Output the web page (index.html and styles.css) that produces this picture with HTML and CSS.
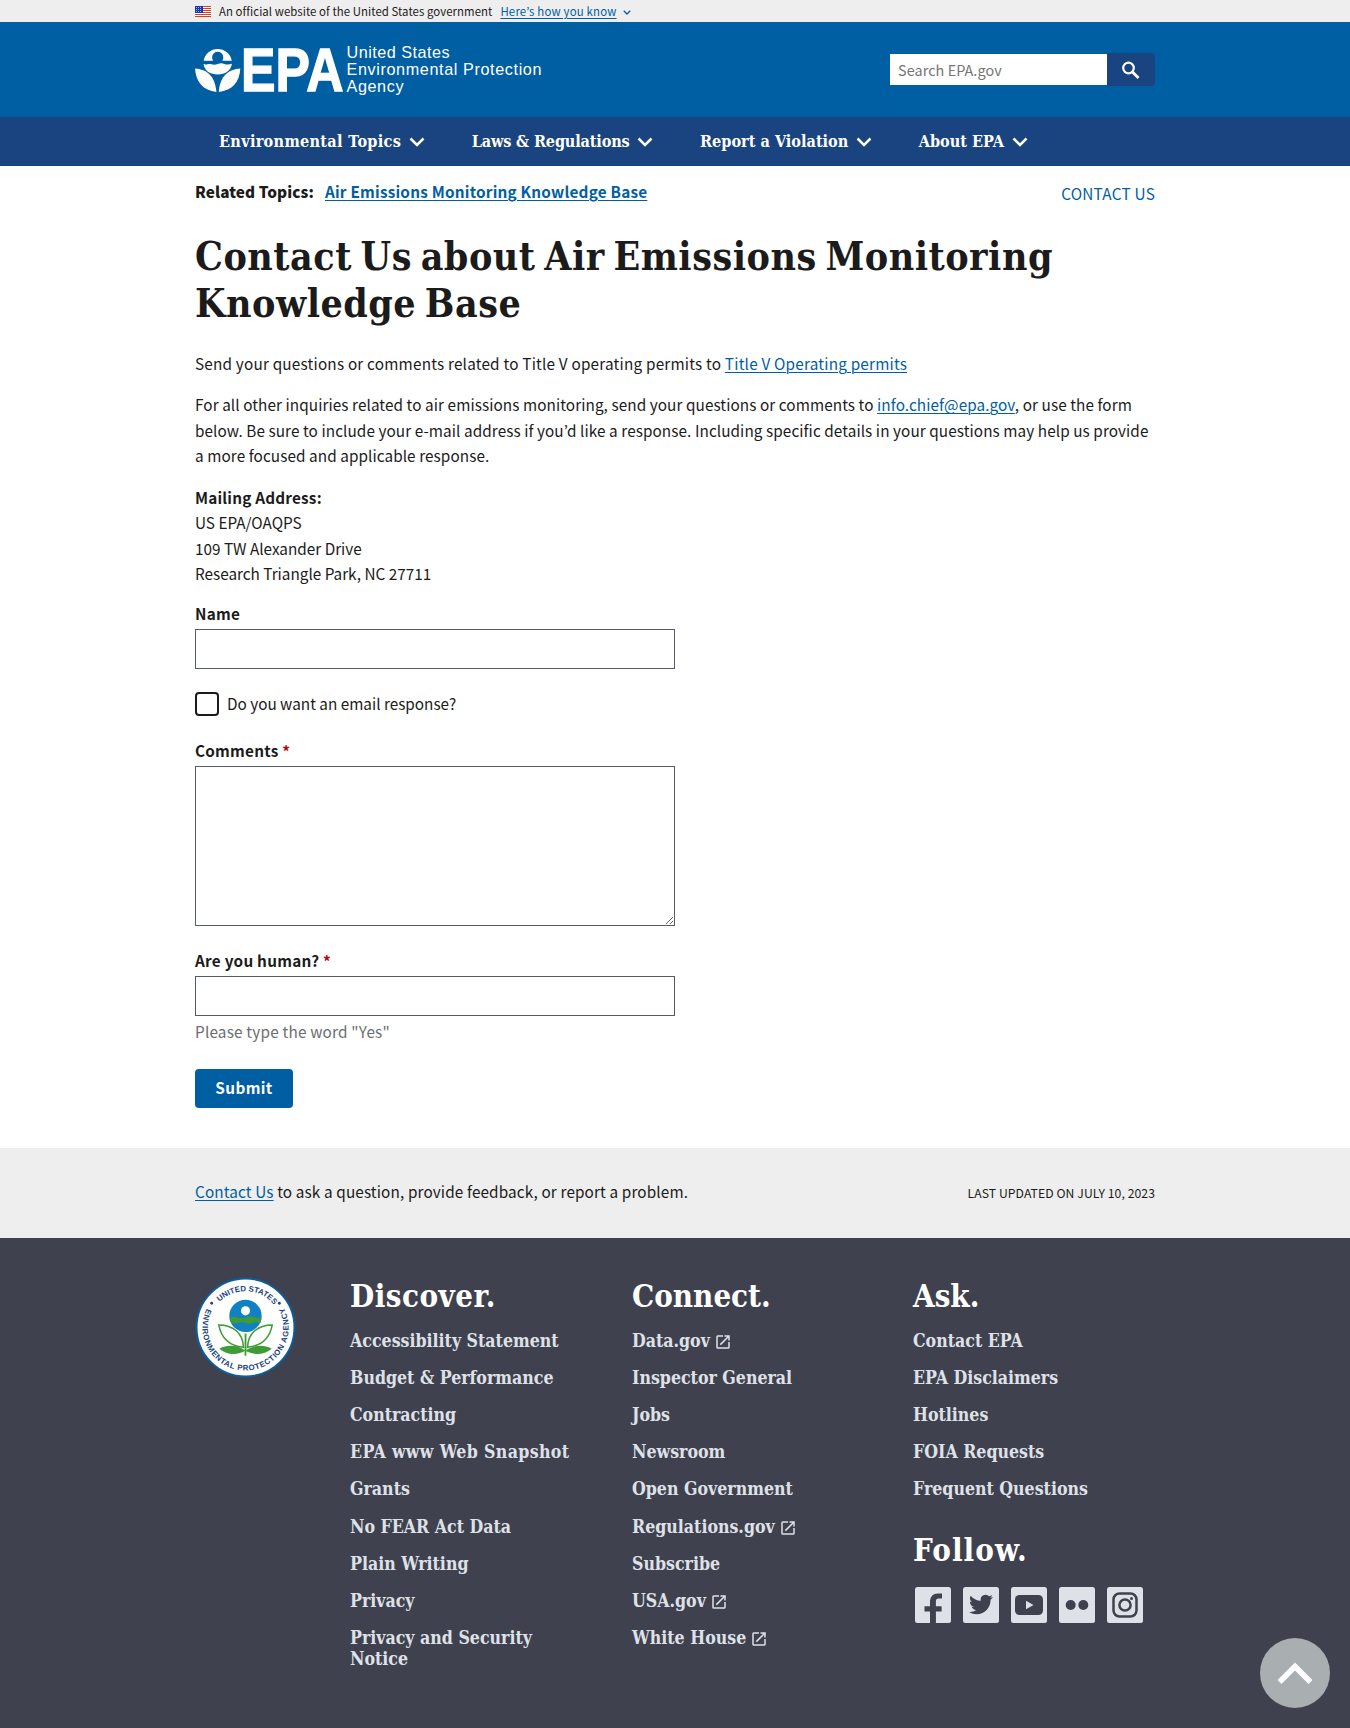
FILE: index.html
```html
<!DOCTYPE html>
<html lang="en">
<head>
<meta charset="utf-8">
<title>Contact Us about Air Emissions Monitoring Knowledge Base | US EPA</title>
<link rel="stylesheet" href="styles.css">
</head>
<body>
<svg class="defs" width="0" height="0">
  <symbol id="chevron" viewBox="0 0 16 10"><path d="M1.5 1.5 8 8l6.500-6.500" fill="none" stroke="currentColor" stroke-width="2.500"/></symbol>
  <symbol id="external" viewBox="0 0 24 24"><path fill="currentColor" d="M19 19H5V5h7V3H5a2 2 0 0 0-2 2v14a2 2 0 0 0 2 2h14c1.100 0 2-.9 2-2v-7h-2v7zM14 3v2h3.590l-9.830 9.830 1.410 1.410L19 6.410V10h2V3h-7z"/></symbol>
</svg>

<div class="banner">
  <div class="wrap banner-row">
    <svg class="flag" viewBox="0 0 16 11"><path fill="#fff" d="M0 0h16v11H0z"/><path stroke="#db3e1f" stroke-width="1" d="M0 .5h16M0 2.500h16M0 4.500h16M0 6.500h16M0 8.500h16M0 10.500h16"/><path fill="#1e33b1" d="M0 0h8v7H0z"/><path stroke="#aab4ee" stroke-width="1" stroke-dasharray="1 1" d="M1 1.500h6M1 3.500h6M1 5.500h6"/></svg>
    <span class="banner-text">An official website of the United States government</span>
    <a class="banner-link" href="#">Here’s how you know</a>
    <svg class="banner-chevron"><use href="#chevron"/></svg>
  </div>
</div>

<header class="header">
  <div class="wrap header-row">
    <svg class="logo" viewBox="0 0 350 52" role="img">
      <g fill="#fff">
        <path d="M8.600 14.800a14.300 14.300 0 0 1 28.200 0h-9.600a5.600 5.600 0 1 0-9 0z"/>
        <path d="M8.500 18c3 1.300 4.500-.6 7 0s4.200 1.200 7.200.1 4.300-.9 6.700-.1 4.500.9 7.500-.2C36 25 30 28.500 22.700 28.500S9.500 25 8.500 18z"/>
        <path d="M0 22.500c12 1 20 7 21.500 23.500C8 44.500 1 36 0 22.500zM45.300 22.500c-12 1-20 7-21.500 23.500C37.500 44.500 44.500 36 45.300 22.500z"/>
      </g>
      <g class="logo-epa"><text x="46" y="44.500" textLength="102.500" lengthAdjust="spacingAndGlyphs">EPA</text></g>
      <g class="logo-name">
        <text x="151.500" y="12.300" textLength="103">United States</text>
        <text x="151.500" y="28.900" textLength="195">Environmental Protection</text>
        <text x="151.500" y="45.800" textLength="57">Agency</text>
      </g>
    </svg>
    <form class="search">
      <input class="search-input" type="text" placeholder="Search EPA.gov">
      <button class="search-button" type="button"><svg viewBox="0 0 24 24" fill="none" stroke="#fff"><circle cx="9.500" cy="9" r="5.300" stroke-width="2.200"/><path d="m13.500 13 6 6" stroke-width="2.800"/></svg></button>
    </form>
  </div>
</header>

<nav class="nav">
  <div class="wrap nav-row">
    <a href="#" class="nav-item nav-item--wide">Environmental Topics<svg><use href="#chevron"/></svg></a>
    <a href="#" class="nav-item nav-item--tight">Laws &amp; Regulations<svg><use href="#chevron"/></svg></a>
    <a href="#" class="nav-item">Report a Violation<svg><use href="#chevron"/></svg></a>
    <a href="#" class="nav-item">About EPA<svg><use href="#chevron"/></svg></a>
  </div>
</nav>

<main class="wrap main">
  <div class="topics">
    <div class="topics-list"><b>Related Topics:</b><a href="#">Air Emissions Monitoring Knowledge Base</a></div>
    <a class="topics-contact" href="#">CONTACT US</a>
  </div>
  <h1>Contact Us about Air Emissions Monitoring Knowledge Base</h1>
  <p class="lead">Send your questions or comments related to Title V operating permits to <a href="#">Title V Operating permits</a></p>
  <p class="body">For all other inquiries related to air emissions monitoring, send your questions or comments to <a href="#">info.chief@epa.gov</a>, or use the form<br>below. Be sure to include your e-mail address if you’d like a response. Including specific details in your questions may help us provide<br>a more focused and applicable response.</p>
  <p><b>Mailing Address:</b><br>US EPA/OAQPS<br>109 TW Alexander Drive<br>Research Triangle Park, NC 27711</p>
  <form class="form">
    <label class="label" for="name">Name</label>
    <input class="field" id="name" type="text">
    <label class="check"><span class="check-box"></span>Do you want an email response?</label>
    <label class="label" for="comments">Comments <span class="req">*</span></label>
    <textarea class="field area" id="comments"></textarea>
    <label class="label" for="human">Are you human? <span class="req">*</span></label>
    <input class="field" id="human" type="text">
    <div class="hint">Please type the word "Yes"</div>
    <button class="submit" type="button">Submit</button>
  </form>
</main>

<div class="feedback">
  <div class="wrap feedback-row">
    <div class="feedback-text"><a href="#">Contact Us</a> to ask a question, provide feedback, or report a problem.</div>
    <div class="updated">LAST UPDATED ON JULY 10, 2023</div>
  </div>
</div>

<footer class="footer">
  <div class="wrap footer-grid">
    <svg class="seal" viewBox="0 0 100 100" role="img">
      <circle cx="50" cy="50" r="48.500" fill="#fff" stroke="#0d5c9c" stroke-width="2"/>
      <defs>
        <path id="arc-top" d="M14 50a36 36 0 0 1 72 0"/>
        <path id="arc-bottom" d="M23.500 16.500a42.700 42.700 0 1 0 53 0"/>
      </defs>
      <g class="seal-text">
        <text><textPath href="#arc-top" startOffset="28">UNITED STATES</textPath></text>
        <text class="seal-lower"><textPath href="#arc-bottom" startOffset="19">ENVIRONMENTAL PROTECTION AGENCY</textPath></text>
      </g>
      <circle cx="16.500" cy="26" r="1.400" fill="#1a4480"/><circle cx="83.500" cy="26" r="1.400" fill="#1a4480"/>
      <circle cx="50" cy="38.500" r="16" fill="#1281c4"/>
      <path fill="#3f9c35" d="M34.200 40.500q4-2 8-.5t8 0 8-.5 7.700 1q-.3 3-1.500 5-4-1.500-7 0t-7 0-7 0-7.700-.5q-1.200-2-1.500-4.500z"/>
      <circle cx="50" cy="33.500" r="4.500" fill="#fff"/>
      <g fill="#fff" stroke="#3f9c35" stroke-width="1.500"><path d="M23.500 47.500c14 0 24 8 24.500 22-14-1-22-9-24.500-22zM76.500 47.500c-14 0-24 8-24.500 22 14-1 22-9 24.500-22z"/></g>
      <path fill="#3f9c35" d="M24 71c9-5 20-3 26 2 6-5 17-7 26-2-8 7-19 6-26 2-7 4-18 5-26-2z"/>
      <path stroke="#3f9c35" stroke-width="1.800" d="M50 56v22"/>
    </svg>
    <div class="footer-col">
      <h2 class="discover">Discover.</h2>
      <ul>
        <li>Accessibility Statement</li><li>Budget &amp; Performance</li><li>Contracting</li><li class="snapshot">EPA www Web Snapshot</li><li>Grants</li><li>No FEAR Act Data</li><li>Plain Writing</li><li>Privacy</li><li>Privacy and Security<br>Notice</li>
      </ul>
    </div>
    <div class="footer-col">
      <h2>Connect.</h2>
      <ul>
        <li>Data.gov<svg><use href="#external"/></svg></li><li>Inspector General</li><li>Jobs</li><li>Newsroom</li><li>Open Government</li><li>Regulations.gov<svg><use href="#external"/></svg></li><li>Subscribe</li><li>USA.gov<svg><use href="#external"/></svg></li><li>White House<svg><use href="#external"/></svg></li>
      </ul>
    </div>
    <div class="footer-col">
      <h2>Ask.</h2>
      <ul>
        <li>Contact EPA</li><li>EPA Disclaimers</li><li>Hotlines</li><li>FOIA Requests</li><li>Frequent Questions</li>
      </ul>
      <h2 class="follow">Follow.</h2>
      <div class="social">
        <svg viewBox="0 0 36 36"><rect width="36" height="36" rx="2.500"/><path class="ink" d="M15 36V24.500H9.500v-5.200H15v-4.100c0-5.500 3-8.600 8-8.600h4v5h-3.100c-2.300 0-3 1-3 3v4.700h5.700v5.200h-5.700V36z"/></svg>
        <svg viewBox="0 0 36 36"><rect width="36" height="36" rx="2.500"/><path class="ink" transform="translate(6 5.500)" d="M23.950 4.570a10 10 0 0 1-2.820.77 4.960 4.960 0 0 0 2.160-2.720c-.95.550-2 .96-3.130 1.180a4.920 4.920 0 0 0-8.380 4.480C7.690 8.100 4.070 6.130 1.640 3.160a4.820 4.820 0 0 0-.67 2.480c0 1.710.87 3.210 2.190 4.100a4.900 4.900 0 0 1-2.230-.62v.06a4.920 4.920 0 0 0 3.950 4.830 5 5 0 0 1-2.210.08 4.940 4.940 0 0 0 4.600 3.420A9.870 9.870 0 0 1 0 19.540a13.990 13.990 0 0 0 7.550 2.210c9.050 0 13.990-7.500 13.990-13.980 0-.21 0-.42-.01-.63.960-.69 1.800-1.560 2.460-2.550z"/></svg>
        <svg viewBox="0 0 36 36"><rect width="36" height="36" rx="2.500"/><rect class="ink" x="4" y="8" width="28" height="20" rx="4.500"/><path d="M15 13.700v8.600l7.500-4.300z"/></svg>
        <svg viewBox="0 0 36 36"><rect width="36" height="36" rx="2.500"/><circle class="ink" cx="11.700" cy="18" r="5"/><circle class="ink" cx="24.300" cy="18" r="5"/></svg>
        <svg viewBox="0 0 36 36"><rect width="36" height="36" rx="2.500"/><g class="line"><rect x="6.500" y="6.500" width="23" height="23" rx="6"/><circle cx="18" cy="18" r="5.600"/></g><circle class="ink" cx="24.500" cy="11.500" r="1.500"/></svg>
      </div>
    </div>
  </div>
</footer>
<a class="to-top" href="#"><svg viewBox="0 0 36 24"><path d="M2.500 21 18 5.500 33.500 21" fill="none" stroke="#fff" stroke-width="5.500"/></svg></a>
</body>
</html>
```
FILE: styles.css
```css
* { box-sizing: border-box; }
body {
  margin: 0;
  background: #fff;
  color: #1b1b1b;
  font-family: "Noto Sans CJK KR", "Noto Sans", sans-serif;
  font-size: 15.3px;
  line-height: 25.4px;
}
a { color: #005ea2; text-decoration-thickness: 1px; text-underline-offset: 2px; }
b { letter-spacing: .2px; }
.defs { position: absolute; }
.wrap { width: 960px; margin: 0 auto; }

.banner { height: 22px; background: #eee; }
.banner-row { display: flex; align-items: center; height: 22px; font-size: 11.400px; line-height: 22px; letter-spacing: .06px; }
.flag { width: 16px; height: 11px; margin-right: 8px; }
.banner-link { margin-left: 8px; letter-spacing: .2px; }
.banner-chevron { width: 8px; height: 5px; margin: 2px 0 0 6px; color: #005ea2; }

.header { height: 95px; background: #005ea2; }
.header-row { display: flex; justify-content: space-between; align-items: flex-start; }
.logo { width: 350px; height: 52px; margin-top: 24px; overflow: visible; }
.logo-epa { fill: #fff; stroke: #fff; stroke-width: 1.400px; font: bold 62px "Liberation Sans", sans-serif; }
.logo-name { fill: #fff; font: 16.200px "Liberation Sans", sans-serif; }
.search { display: flex; align-items: center; margin-top: 31px; height: 33px; }
.search-input { width: 217px; height: 31px; border: 0; padding: 0 8px; font: 14.400px "Noto Sans CJK KR", sans-serif; letter-spacing: .07px; }
.search-input::placeholder { color: #757575; }
.search-button { width: 48px; height: 33px; border: 0; padding: 5px 12px 3px; background: #1a4480; border-radius: 0 4px 4px 0; }
.search-button svg { display: block; width: 24px; height: 24px; }

.nav { height: 49px; background: #1a4480; }
.nav-row { display: flex; gap: 47px; padding-left: 24px; }
.nav-item {
  display: flex; align-items: center; height: 49px;
  color: #fff; text-decoration: none; white-space: nowrap;
  font: bold 16.100px/49px "DejaVu Serif Condensed", "DejaVu Serif", serif;
}
.nav-item--wide { letter-spacing: .3px; }
.nav-item--tight { letter-spacing: -.15px; }
.nav-item svg { width: 16px; height: 10px; margin: 0 0 0 7.500px; }

.topics { display: flex; justify-content: space-between; padding-top: 13px; }
.topics-list { display: flex; gap: 11px; font-weight: bold; letter-spacing: .22px; }
.topics-list b { letter-spacing: .1px; }
.topics-contact { margin-top: 2px; text-decoration: none; letter-spacing: .25px; }
h1, h2 { font-family: "DejaVu Serif Condensed", "DejaVu Serif", serif; font-weight: bold; }
h1 { margin: 27px 0 24px; font-size: 39px; line-height: 47px; letter-spacing: .5px; word-spacing: -4px; }
p { margin: 0 0 16px; white-space: nowrap; }
.lead { margin-bottom: 15.500px; letter-spacing: .2px; }
.body { margin-bottom: 16.500px; letter-spacing: .08px; }

.form { display: flex; flex-direction: column; align-items: flex-start; }
.label { font-weight: bold; line-height: 20px; letter-spacing: .25px; }
.req { color: #b50909; }
.field { width: 480px; height: 40px; margin: 6px 0 0; border: 1px solid #565c65; background: #fff; }
.area { height: 160px; margin-bottom: 24px; }
.check { display: flex; align-items: center; gap: 8px; margin: 23px 0 24px; height: 24px; }
.check-box { width: 24px; height: 24px; border: 2px solid #1b1b1b; border-radius: 4px; }
.hint { margin-top: 3px; color: #6b6e72; letter-spacing: .2px; }
.submit { width: 98px; height: 39px; margin-top: 25px; padding: 0 0 3px; border: 0; border-radius: 4px; background: #005ea2; color: #fff; font: bold 15.300px/16px "Noto Sans CJK KR", sans-serif; letter-spacing: .4px; }

.feedback { margin-top: 40px; height: 90px; background: #eee; }
.feedback-row { display: flex; justify-content: space-between; align-items: center; height: 88px; }
.feedback-text { letter-spacing: .13px; }
.updated { padding-top: 4px; font-size: 12.200px; letter-spacing: .07px; }

.footer { height: 490px; background: #3f424e; }
.footer-grid { display: grid; grid-template-columns: 155px 282px 281px 1fr; padding-top: 39px; }
.seal { width: 101px; height: 101px; }
.seal-text { fill: #1a4480; font: bold 7.800px "Liberation Sans", sans-serif; }
.seal-lower { letter-spacing: .6px; }
.footer h2 { margin: 0 0 14.500px; color: #fff; font-size: 31px; line-height: 38px; }
.footer .discover { letter-spacing: .5px; }
.footer ul { margin: 0; padding: 0; list-style: none; }
.footer li { margin-bottom: 16.200px; color: #dfe1e8; font: bold 17.600px/21px "DejaVu Serif Condensed", "DejaVu Serif", serif; white-space: nowrap; }
.footer .snapshot { letter-spacing: .35px; }
.footer li svg { display: inline-block; width: 18px; height: 18px; margin: -4px 0 0 4px; vertical-align: -4px; }
.footer .follow { margin: 31.500px 0 18px; letter-spacing: 1.100px; }
.social { display: flex; gap: 12px; padding-left: 2px; }
.social svg { width: 36px; height: 36px; fill: #dfe1e8; }
.social .ink { fill: #3f424e; }
.social .line { fill: none; stroke: #3f424e; stroke-width: 2.500px; }

.to-top { position: fixed; right: 20px; bottom: 20px; display: flex; align-items: center; justify-content: center; width: 70px; height: 70px; border-radius: 50%; background: #a9aeb1; }
.to-top svg { width: 36px; height: 24px; }
```
